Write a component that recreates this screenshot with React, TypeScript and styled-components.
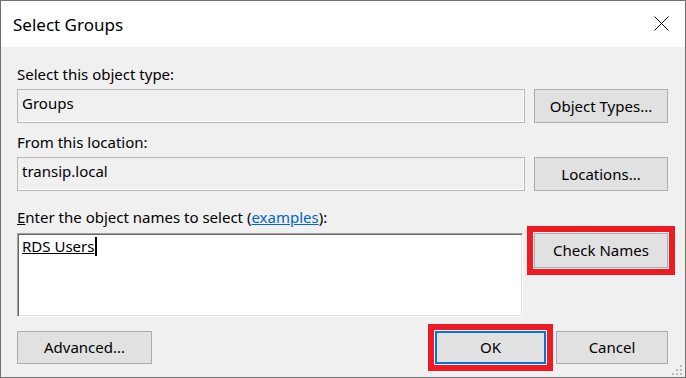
import React from 'react';
import styled, { createGlobalStyle } from 'styled-components';

const GlobalStyle = createGlobalStyle`
  html, body {
    margin: 0;
    padding: 0;
    background: #ffffff;
  }
  body {
    font-family: "Noto Sans", "Open Sans", sans-serif;
  }
`;

const Window = styled.div`
  position: relative;
  box-sizing: border-box;
  width: 686px;
  height: 378px;
  border: 1px solid #707070;
  background: #f0f0f0;
  display: flex;
  flex-direction: column;
`;

const TitleBar = styled.div`
  height: 46px;
  flex: none;
  background: #ffffff;
  display: flex;
  align-items: center;
  justify-content: space-between;
  padding: 0 16px 0 12px;
`;

const Title = styled.span`
  font-size: 17px;
  color: #000000;
`;

const CloseButton = styled.button`
  appearance: none;
  background: none;
  border: none;
  padding: 0;
  width: 15px;
  height: 15px;
  display: flex;
  margin-top: -1px;
`;

const Body = styled.div`
  flex: 1;
  display: flex;
  flex-direction: column;
  padding: 17px 17px 0 16px;
  font-size: 15px;
  line-height: 20px;
  color: #000000;
`;

const Label = styled.label<{ $top?: number }>`
  display: block;
  height: 20px;
  margin-top: ${({ $top }) => $top ?? 0}px;
  white-space: nowrap;
`;

const Link = styled.a`
  color: #0066cc;
  text-decoration: underline;
`;

const Row = styled.div<{ $top: number; $gap?: number }>`
  display: flex;
  align-items: flex-start;
  gap: ${({ $gap }) => $gap ?? 9}px;
  margin-top: ${({ $top }) => $top}px;
`;

const Field = styled.div`
  flex: 1;
  box-sizing: border-box;
  height: 34px;
  padding: 3px 4px;
  border: 1px solid #b9b9b9;
  box-shadow: inset -1px -1px 0 #ffffff;
  background: #f0f0f0;
  white-space: nowrap;
`;

const NamesBox = styled.div`
  flex: 1;
  box-sizing: border-box;
  height: 84px;
  padding: 2px 4px;
  background: #ffffff;
  border: 1px solid;
  border-color: #a0a0a0 #ffffff #ffffff #a0a0a0;
  box-shadow: inset 1px 1px 0 #696969, inset -1px -1px 0 #e3e3e3;
`;

const Name = styled.span`
  text-decoration: underline;
  text-underline-offset: 1px;
`;

const Caret = styled.span`
  display: inline-block;
  width: 1.5px;
  height: 19px;
  margin-left: 1px;
  background: #000000;
  vertical-align: -4px;
`;

const Button = styled.button<{ $width: number; $height?: number; $default?: boolean; $marked?: boolean }>`
  appearance: none;
  flex: none;
  box-sizing: border-box;
  width: ${({ $width }) => $width}px;
  height: ${({ $height }) => $height ?? 34}px;
  padding: 0 0 1px 0;
  font-family: inherit;
  font-size: 15px;
  line-height: 20px;
  color: #000000;
  background: #e1e1e1;
  border: 1px solid ${({ $default }) => ($default ? '#0078d7' : '#adadad')};
  box-shadow: ${({ $marked, $default }) =>
    [
      $default ? 'inset 0 0 0 1px #0078d7' : '',
      $marked ? '0 0 0 1px #f0f0f0, 0 0 0 7px #ed1c24' : '',
    ]
      .filter(Boolean)
      .join(', ') || 'none'};
`;

const Footer = styled.div`
  display: flex;
  align-items: center;
  gap: 10px;
  margin-top: 14px;
`;

const Spacer = styled.div`
  flex: 1;
`;

const SizeGrip = styled.svg`
  position: absolute;
  right: 3px;
  bottom: 2px;
`;

export default function App() {
  return (
    <>
      <GlobalStyle />
      <Window>
        <TitleBar>
          <Title>Select Groups</Title>
          <CloseButton aria-label='close'>
            <svg width='15' height='15' viewBox='0 0 15 15'>
              <path d='M0.5 0.5 L14.5 14.5 M14.5 0.5 L0.5 14.5' stroke='#000' strokeWidth='1' fill='none' />
            </svg>
          </CloseButton>
        </TitleBar>
        <Body>
          <Label>Select this object type:</Label>
          <Row $top={5}>
            <Field>Groups</Field>
            <Button $width={134}>Object Types...</Button>
          </Row>

          <Label $top={9}>From this location:</Label>
          <Row $top={5}>
            <Field>transip.local</Field>
            <Button $width={134}>Locations...</Button>
          </Row>

          <Label $top={16}>
            <u>E</u>nter the object names to select (<Link>examples</Link>):
          </Label>
          <Row $top={6} $gap={11}>
            <NamesBox>
              <Name>RDS Users</Name>
              <Caret />
            </NamesBox>
            <Button $width={134} $height={35} $marked>
              Check Names
            </Button>
          </Row>

          <Footer>
            <Button $width={135} $height={33}>
              Advanced...
            </Button>
            <Spacer />
            <Button $width={111} $height={33} $default $marked>
              OK
            </Button>
            <Button $width={112} $height={33}>
              Cancel
            </Button>
          </Footer>
        </Body>
        <SizeGrip width='10' height='10' viewBox='0 0 10 10'>
          <g fill='#bcbcbc'>
            <rect x='8' y='0' width='2' height='2' />
            <rect x='4' y='4' width='2' height='2' />
            <rect x='8' y='4' width='2' height='2' />
            <rect x='0' y='8' width='2' height='2' />
            <rect x='4' y='8' width='2' height='2' />
            <rect x='8' y='8' width='2' height='2' />
          </g>
        </SizeGrip>
      </Window>
    </>
  );
}
